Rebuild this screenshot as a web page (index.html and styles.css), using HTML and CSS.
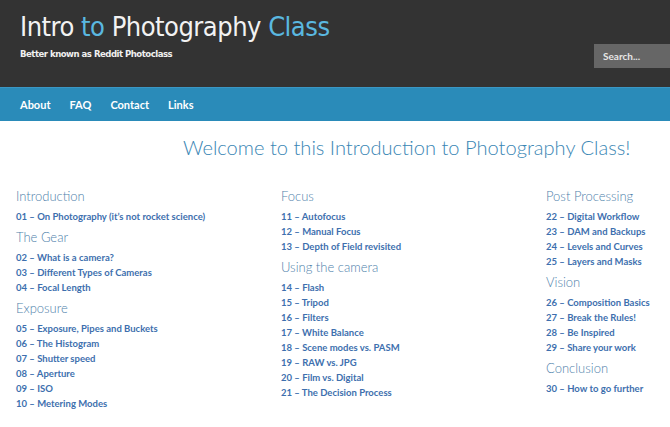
FILE: index.html
```html
<!DOCTYPE html>
<html lang="en">
<head>
    <meta charset="UTF-8">
    <meta name="viewport" content="width=device-width, initial-scale=1.0">
    <title>Intro to Photography Class</title>
    <link rel="stylesheet" href="styles.css">
</head>
<body>

<header class="site-header">
    <div class="branding">
        <h1 class="site-title">Intro <span class="accent">to</span> Photography <span class="accent">Class</span></h1>
        <p class="site-desc">Better known as Reddit Photoclass</p>
    </div>
    <input class="search" type="text" placeholder="Search...">
</header>

<nav class="main-nav">
    <a href="#">About</a>
    <a href="#">FAQ</a>
    <a href="#">Contact</a>
    <a href="#">Links</a>
</nav>

<main class="content">
    <h2 class="welcome">Welcome to this Introduction to Photography Class!</h2>

    <div class="columns">
        <div class="col">
            <h3>Introduction</h3>
            <ul>
                <li><a href="#">01 – On Photography (it’s not rocket science)</a></li>
            </ul>
            <h3>The Gear</h3>
            <ul>
                <li><a href="#">02 – What is a camera?</a></li>
                <li><a href="#">03 – Different Types of Cameras</a></li>
                <li><a href="#">04 – Focal Length</a></li>
            </ul>
            <h3>Exposure</h3>
            <ul>
                <li><a href="#">05 – Exposure, Pipes and Buckets</a></li>
                <li><a href="#">06 – The Histogram</a></li>
                <li><a href="#">07 – Shutter speed</a></li>
                <li><a href="#">08 – Aperture</a></li>
                <li><a href="#">09 – ISO</a></li>
                <li><a href="#">10 – Metering Modes</a></li>
            </ul>
        </div>
        <div class="col">
            <h3>Focus</h3>
            <ul>
                <li><a href="#">11 – Autofocus</a></li>
                <li><a href="#">12 – Manual Focus</a></li>
                <li><a href="#">13 – Depth of Field revisited</a></li>
            </ul>
            <h3>Using the camera</h3>
            <ul>
                <li><a href="#">14 – Flash</a></li>
                <li><a href="#">15 – Tripod</a></li>
                <li><a href="#">16 – Filters</a></li>
                <li><a href="#">17 – White Balance</a></li>
                <li><a href="#">18 – Scene modes vs. PASM</a></li>
                <li><a href="#">19 – RAW vs. JPG</a></li>
                <li><a href="#">20 – Film vs. Digital</a></li>
                <li><a href="#">21 – The Decision Process</a></li>
            </ul>
        </div>
        <div class="col">
            <h3>Post Processing</h3>
            <ul>
                <li><a href="#">22 – Digital Workflow</a></li>
                <li><a href="#">23 – DAM and Backups</a></li>
                <li><a href="#">24 – Levels and Curves</a></li>
                <li><a href="#">25 – Layers and Masks</a></li>
            </ul>
            <h3>Vision</h3>
            <ul>
                <li><a href="#">26 – Composition Basics</a></li>
                <li><a href="#">27 – Break the Rules!</a></li>
                <li><a href="#">28 – Be Inspired</a></li>
                <li><a href="#">29 – Share your work</a></li>
            </ul>
            <h3>Conclusion</h3>
            <ul>
                <li><a href="#">30 – How to go further</a></li>
            </ul>
        </div>
    </div>
</main>

</body>
</html>
```

FILE: styles.css
```css
body {
    margin: 0;
    font-family: Lato, "Open Sans", sans-serif;
    background-color: #fff;
}
.site-header {
    display: flex;
    justify-content: space-between;
    align-items: flex-start;
    height: 87px;
    background-color: #333;
}
.branding {
    padding-left: 20px;
}
.site-title {
    margin: 8px 0 0 0;
    font-family: "DejaVu Sans Condensed", sans-serif;
    font-weight: normal;
    font-size: 27px;
    line-height: 38px;
    letter-spacing: -0.5px;
    color: #f2f2f2;
}
.site-title .accent {
    color: #5ab8e0;
}
.site-desc {
    margin: 2px 0 0 0;
    font-family: "DejaVu Sans Condensed", sans-serif;
    font-weight: bold;
    font-size: 9.5px;
    letter-spacing: -0.5px;
    color: #f0f0f0;
}
.search {
    margin-top: 44px;
    width: 76px;
    height: 24px;
    box-sizing: border-box;
    padding: 0 9px;
    border: none;
    background-color: #666;
    font-family: Lato, sans-serif;
    font-weight: bold;
    font-size: 10px;
    color: #eee;
}
.search::placeholder {
    color: #e6e6e6;
}
.main-nav {
    display: flex;
    height: 34px;
    align-items: center;
    padding-left: 20px;
    background-color: #2a8bb9;
    border-top: 1px solid #3a97c4;
    box-sizing: border-box;
}
.main-nav a {
    margin-right: 19px;
    font-weight: bold;
    font-size: 11px;
    color: #fff;
    text-decoration: none;
}
.content {
    padding: 0 16px;
}
.welcome {
    margin: 12px 0 0 167px;
    white-space: nowrap;
    font-weight: 300;
    font-size: 20.1px;
    line-height: 28px;
    color: #3a86b4;
}
.columns {
    display: grid;
    grid-template-columns: 265px 265px 1fr;
    margin-top: 25px;
}
.col h3 {
    margin: 0;
    font-weight: 300;
    font-size: 13px;
    line-height: 20px;
    color: #4f82ab;
}
.col ul {
    list-style: none;
    margin: 3px 0 3px 0;
    padding: 0;
}
.col li {
    line-height: 15px;
    font-size: 9.5px;
}
.col a {
    font-weight: bold;
    color: #3d6fae;
    text-decoration: none;
}
```
